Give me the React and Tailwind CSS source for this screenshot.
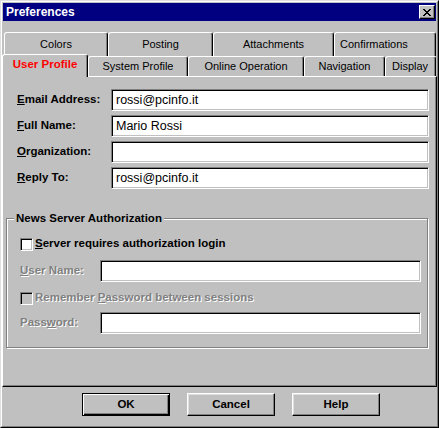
import React from 'react'

const FONT = "font-['Liberation_Sans',Arial,sans-serif]"

const Tab = ({ label, className }) => (
  <div
    className={`h-full flex items-center border-t border-l border-r border-t-white border-l-white border-r-black rounded-t-[3px] shadow-[inset_-1px_0_0_#808080] text-[11px] text-black ${className}`}
  >
    {label}
  </div>
)

const Field = ({ value }) => (
  <div className="h-[22px] w-[318px] bg-white border-t border-l border-b border-r border-t-[#808080] border-l-[#808080] border-b-white border-r-white shadow-[inset_1px_1px_0_#000,inset_-1px_-1px_0_#c0c0c0] pl-[4px] flex items-center text-[12.5px] text-black">
    {value}
  </div>
)

const FormRow = ({ accel, rest, value }) => (
  <div className="flex items-center mb-[4px]">
    <div className="w-[94px] text-[11.5px] font-bold text-black">
      <span className="underline">{accel}</span>
      {rest}
    </div>
    <Field value={value} />
  </div>
)

const Check = ({ disabled }) => (
  <div
    className={`w-[13px] h-[13px] border-t border-l border-b border-r border-t-[#808080] border-l-[#808080] border-b-white border-r-white shadow-[inset_1px_1px_0_#000,inset_-1px_-1px_0_#c0c0c0] ${disabled ? 'bg-[#c0c0c0]' : 'bg-white'}`}
  />
)

const SmallField = () => (
  <div className="h-[22px] w-[321px] bg-white border-t border-l border-b border-r border-t-[#808080] border-l-[#808080] border-b-white border-r-white shadow-[inset_1px_1px_0_#000,inset_-1px_-1px_0_#c0c0c0]" />
)

const Button = ({ label, isDefault }) => (
  <div
    className={
      isDefault
        ? 'w-[88px] h-[23px] flex items-center justify-center border border-black shadow-[inset_1px_1px_0_#fff,inset_-1px_-1px_0_#000,inset_-2px_-2px_0_#808080] text-[11.5px] font-bold text-black'
        : 'w-[88px] h-[23px] flex items-center justify-center border-t border-l border-r border-b border-t-white border-l-white border-r-black border-b-black shadow-[inset_-1px_-1px_0_#808080,inset_1px_1px_0_#dfdfdf] text-[11.5px] font-bold text-black'
    }
  >
    {label}
  </div>
)

export default function App() {
  return (
    <div className={`w-[439px] h-[428px] bg-[#c0c0c0] border-t border-l border-r border-b border-t-[#dfdfdf] border-l-[#dfdfdf] border-r-black border-b-black ${FONT}`}>
      <div className="h-full border-t border-l border-r border-b border-t-white border-l-white border-r-[#808080] border-b-[#808080] flex flex-col">
        {/* title bar */}
        <div className="mx-[1px] mt-[1px] h-[18px] bg-[#000080] flex items-center justify-between pl-[3px] pr-[1px]">
          <span className="text-[12px] font-bold text-white leading-none">Preferences</span>
          <div className="w-[16px] h-[14px] bg-[#c0c0c0] border-t border-l border-r border-b border-t-white border-l-white border-r-black border-b-black shadow-[inset_-1px_-1px_0_#808080] flex items-center justify-center">
            <svg width="8" height="7" viewBox="0 0 8 7" shapeRendering="crispEdges">
              <path d="M0 0h2v1h-2zM6 0h2v1h-2zM1 1h2v1h-2zM5 1h2v1h-2zM2 2h4v1h-4zM3 3h2v1h-2zM2 4h4v1h-4zM1 5h2v1h-2zM5 5h2v1h-2zM0 6h2v1h-2zM6 6h2v1h-2z" fill="#000" />
            </svg>
          </div>
        </div>

        {/* tab rows */}
        <div className="flex ml-[2px] mt-[11px] h-[24px]">
          <Tab label="Colors" className="w-[104px] justify-center" />
          <Tab label="Posting" className="w-[105px] justify-center" />
          <Tab label="Attachments" className="w-[121px] justify-center" />
          <Tab label="Confirmations" className="w-[102px] justify-start pl-[5px]" />
        </div>
        <div className="flex h-[20px]">
          <div className="relative z-10 w-[86px] h-[23px] -mt-[2px] bg-[#c0c0c0] border-t border-l border-r border-t-white border-l-white border-r-black rounded-t-[3px] shadow-[inset_-1px_0_0_#808080] flex items-center justify-center pb-[2px] text-[11.5px] font-bold text-[#ff0000]">
            User Profile
          </div>
          <Tab label="System Profile" className="w-[100px] justify-center" />
          <Tab label="Online Operation" className="w-[116px] justify-center" />
          <Tab label="Navigation" className="w-[81px] justify-center" />
          <Tab label="Display" className="w-[51px] justify-start pl-[6px]" />
        </div>

        {/* panel */}
        <div className="h-[311px] border-t border-l border-r border-b border-t-white border-l-white border-r-black border-b-black shadow-[inset_-1px_-1px_0_#808080] pt-[12px]">
          <div className="pl-[14px]">
            <FormRow accel="E" rest="mail Address:" value="rossi@pcinfo.it" />
            <FormRow accel="F" rest="ull Name:" value="Mario Rossi" />
            <FormRow accel="O" rest="rganization:" value="" />
            <FormRow accel="R" rest="eply To:" value="rossi@pcinfo.it" />
          </div>

          <fieldset className="ml-[3px] mt-[22px] w-[422px] border border-[#808080] shadow-[inset_1px_1px_0_#fff,1px_1px_0_#fff] pb-[13px]">
            <legend className="ml-[7px] px-[2px] bg-[#c0c0c0] text-[11.5px] font-bold leading-[14px] text-black">
              News Server Authorization
            </legend>
            <div className="flex items-center h-[16px] mt-[11px] pl-[13px]">
              <Check />
              <span className="ml-[2px] text-[11.5px] font-bold text-black">
                <span className="underline">S</span>erver requires authorization login
              </span>
            </div>
            <div className="flex items-center mt-[8px] pl-[13px]">
              <div className="w-[80px] text-[11.5px] font-bold text-[#808080] [text-shadow:1px_1px_0_#fff]">
                <span className="underline">U</span>ser Name:
              </div>
              <SmallField />
            </div>
            <div className="flex items-center h-[16px] mt-[8px] pl-[13px]">
              <Check disabled />
              <span className="ml-[2px] text-[11.5px] font-bold text-[#808080] [text-shadow:1px_1px_0_#fff]">
                Remember <span className="underline">P</span>assword between sessions
              </span>
            </div>
            <div className="flex items-center mt-[6px] pl-[13px]">
              <div className="w-[80px] text-[11.5px] font-bold text-[#808080] [text-shadow:1px_1px_0_#fff]">
                Pass<span className="underline">w</span>ord:
              </div>
              <SmallField />
            </div>
          </fieldset>
        </div>

        {/* buttons */}
        <div className="flex gap-[17px] pl-[80px] mt-[6px]">
          <Button label="OK" isDefault />
          <Button label="Cancel" />
          <Button label="Help" />
        </div>
      </div>
    </div>
  )
}
